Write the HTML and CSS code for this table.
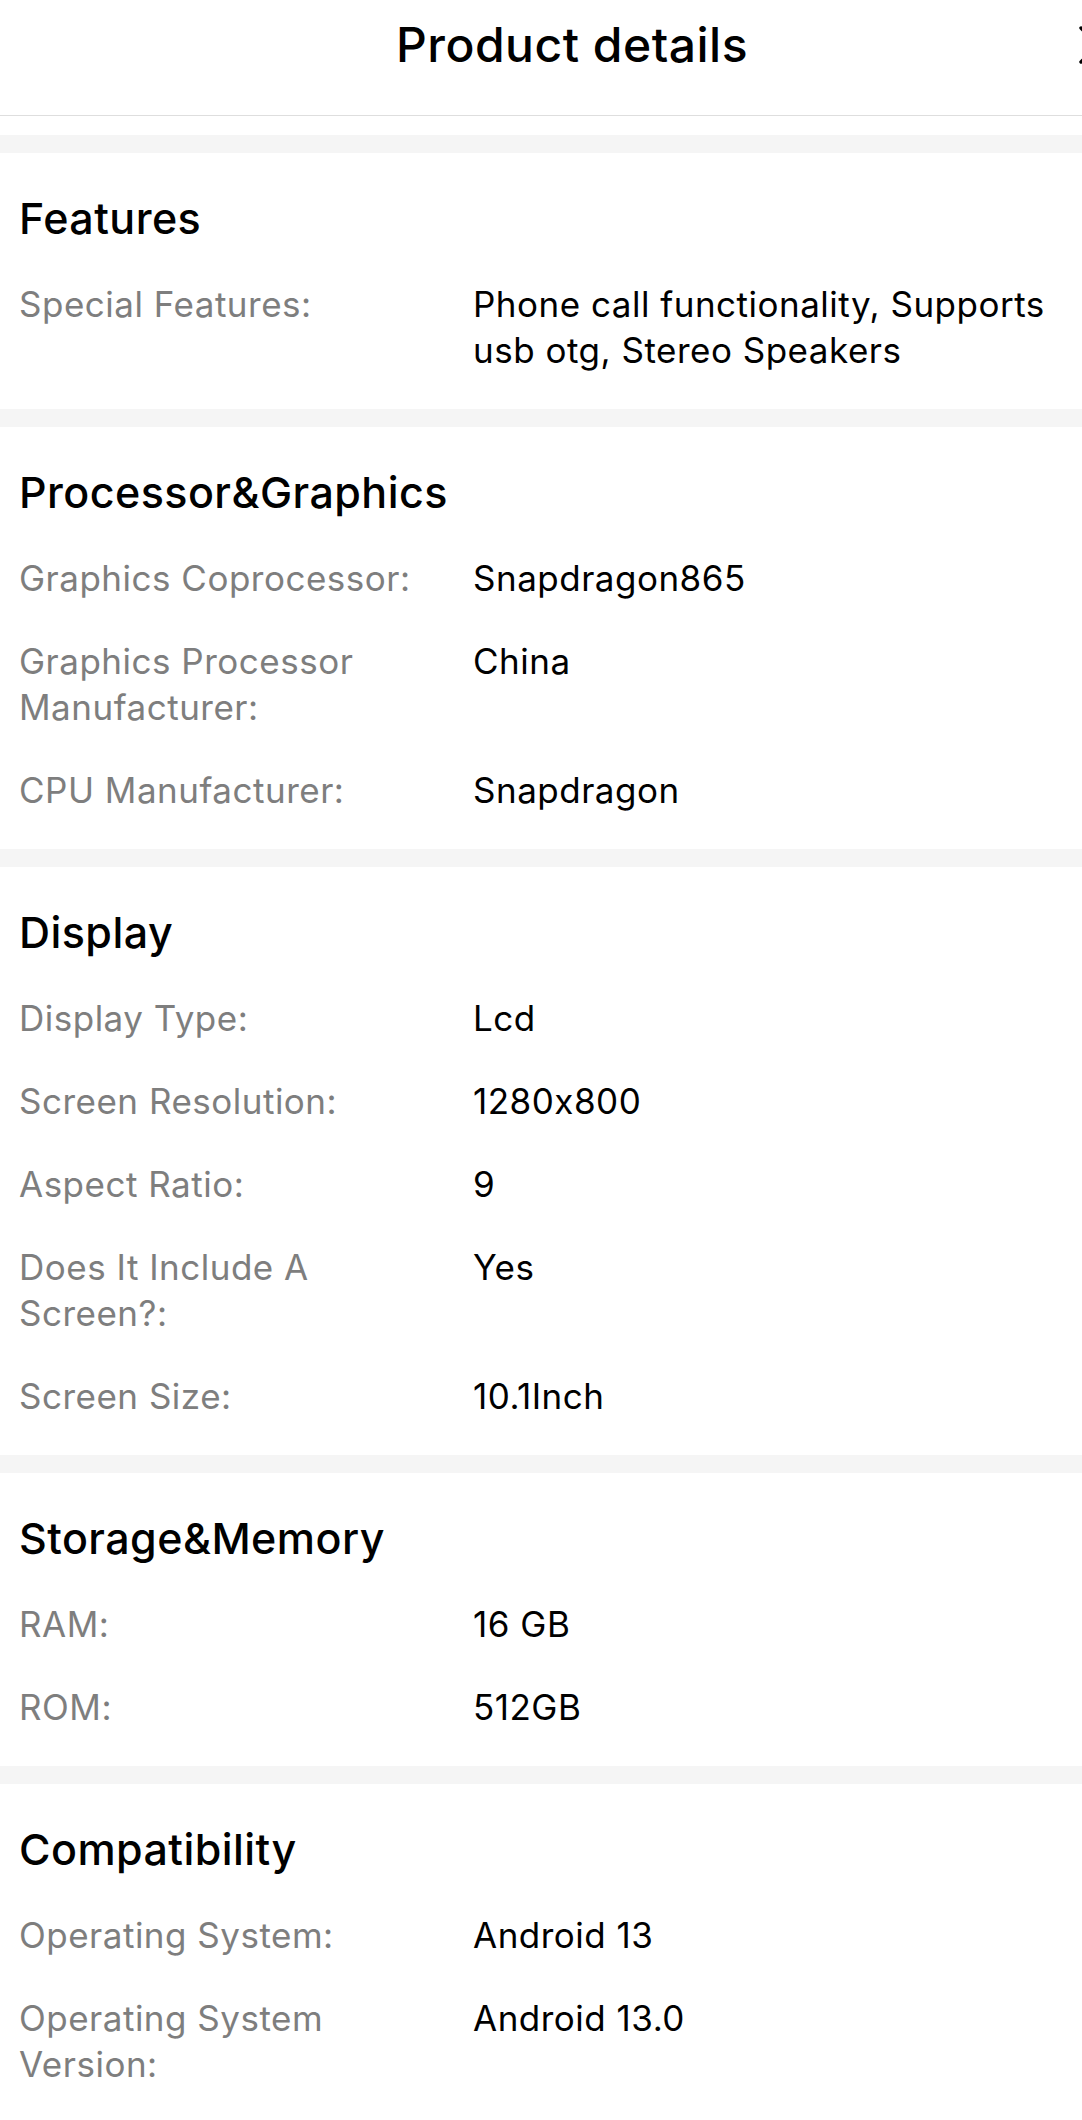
FILE: index.html
```html
<!DOCTYPE html>
<html lang="en">
<head>
<meta charset="utf-8">
<title>Product details</title>
<link rel="stylesheet" href="styles.css">
</head>
<body>
<div class="page">
  <header class="nav">
    <div class="nav-side"></div>
    <h1 class="nav-title">Product details</h1>
    <div class="nav-side nav-right">
      <svg class="close" width="40" height="40" viewBox="0 0 40 40" aria-hidden="true">
        <path d="M3 3 L37 37 M37 3 L3 37" stroke="#000" stroke-width="3.4" stroke-linecap="round" fill="none"/>
      </svg>
    </div>
  </header>
  <div class="top-gap"></div>
  <div class="band"></div>

  <section class="group">
    <h2 class="group-title">Features</h2>
    <dl class="specs">
      <dt>Special Features:</dt><dd>Phone call functionality, Supports usb otg, Stereo Speakers</dd>
    </dl>
  </section>
  <div class="band"></div>

  <section class="group">
    <h2 class="group-title">Processor&amp;Graphics</h2>
    <dl class="specs">
      <dt>Graphics Coprocessor:</dt><dd>Snapdragon865</dd>
      <dt>Graphics Processor Manufacturer:</dt><dd>China</dd>
      <dt>CPU Manufacturer:</dt><dd>Snapdragon</dd>
    </dl>
  </section>
  <div class="band"></div>

  <section class="group">
    <h2 class="group-title">Display</h2>
    <dl class="specs">
      <dt>Display Type:</dt><dd>Lcd</dd>
      <dt>Screen Resolution:</dt><dd>1280x800</dd>
      <dt>Aspect Ratio:</dt><dd>9</dd>
      <dt>Does It Include A Screen?:</dt><dd>Yes</dd>
      <dt>Screen Size:</dt><dd>10.1Inch</dd>
    </dl>
  </section>
  <div class="band"></div>

  <section class="group">
    <h2 class="group-title">Storage&amp;Memory</h2>
    <dl class="specs">
      <dt>RAM:</dt><dd>16 GB</dd>
      <dt>ROM:</dt><dd>512GB</dd>
    </dl>
  </section>
  <div class="band"></div>

  <section class="group">
    <h2 class="group-title">Compatibility</h2>
    <dl class="specs">
      <dt>Operating System:</dt><dd>Android 13</dd>
      <dt>Operating System Version:</dt><dd>Android 13.0</dd>
    </dl>
  </section>
</div>
</body>
</html>
```

FILE: styles.css
```css
html, body {
  margin: 0;
  padding: 0;
  background: #ffffff;
  overflow: hidden;
}

body {
  font-family: Inter, "Noto Sans", "Liberation Sans", sans-serif;
  font-feature-settings: "calt" 0;
  color: #000000;
}

.page {
  width: 1144px;
}

.nav {
  display: grid;
  grid-template-columns: 1fr auto 1fr;
  align-items: start;
  height: 115px;
  border-bottom: 1px solid #dedede;
  box-sizing: content-box;
}

.nav-title {
  margin: 0;
  padding-top: 16px;
  font-size: 48px;
  line-height: 58px;
  font-weight: 500;
  letter-spacing: 0.5px;
}

.nav-right {
  display: flex;
  justify-content: flex-end;
  padding-top: 25px;
  padding-right: 26px;
}

.close {
  display: block;
}

.top-gap {
  height: 19px;
}

.band {
  height: 18px;
  background: #f5f5f5;
}

.group {
  padding: 39px 19px 18px 19px;
}

.group-title {
  margin: 0 0 18px 0;
  font-size: 43px;
  line-height: 52px;
  font-weight: 500;
  letter-spacing: 0.45px;
}

.specs {
  margin: 0;
  display: grid;
  grid-template-columns: 420px 1fr;
  column-gap: 34px;
  font-size: 35px;
  line-height: 46px;
  letter-spacing: 0.5px;
}

.specs dt,
.specs dd {
  margin: 0;
  padding: 18.5px 0;
}

.specs dt {
  color: #7e7e7e;
}

.specs dd {
  color: #000000;
  max-width: 620px;
}
```
